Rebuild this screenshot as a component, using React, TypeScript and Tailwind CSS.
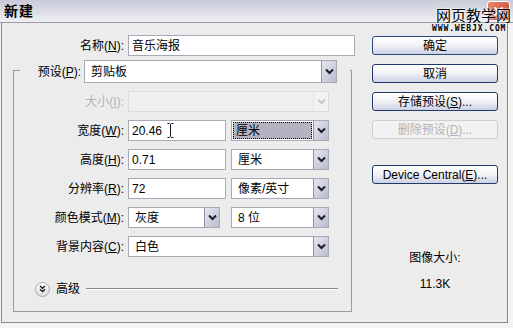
import React from 'react';

const font = "font-['Liberation_Sans','Noto_Sans_CJK_SC',sans-serif]";

function Chevron({ disabled }: { disabled?: boolean }) {
  return (
    <svg width="9" height="7" viewBox="0 0 9 7">
      <path
        d="M1 1.5 L4.5 5 L8 1.5"
        fill="none"
        stroke={disabled ? '#c8c8c8' : '#1a1a2a'}
        strokeWidth="2"
      />
    </svg>
  );
}

function DropButton({ disabled }: { disabled?: boolean }) {
  return (
    <div
      className={`w-[15px] h-full flex items-center justify-center border-l ${
        disabled
          ? 'border-[#e4e4e4] bg-[#f2f2f2]'
          : 'border-[#8e90a8] bg-gradient-to-br from-[#e6e7f0] to-[#b9bccf]'
      }`}>
      <Chevron disabled={disabled} />
    </div>
  );
}

function Select({
  value,
  width,
  disabled,
  focused
}: {
  value: string;
  width: string;
  disabled?: boolean;
  focused?: boolean;
}) {
  return (
    <div
      className={`${width} h-[21px] flex border ${
        disabled ? 'border-[#dcdcdc] bg-[#f0f0f0]' : 'border-[#a7a9b4] bg-white'
      }`}>
      <div className="flex-1 flex items-center p-[1px]">
        {focused ? (
          <div className="w-full h-full flex items-center pl-[2px] bg-[#b3b3c2] border border-dotted border-black">
            {value}
          </div>
        ) : (
          <span className="pl-[5px]">{value}</span>
        )}
      </div>
      <DropButton disabled={disabled} />
    </div>
  );
}

function Input({ value, width, caret }: { value: string; width: string; caret?: boolean }) {
  return (
    <div className={`${width} h-[21px] flex items-center border border-[#a7a9b4] bg-white pl-[3px]`}>
      {value}
      {caret && (
        <svg className="ml-[5px]" width="7" height="15" viewBox="0 0 7 15">
          <path d="M0.5 0.5 H2.5 L3.5 1.5 L4.5 0.5 H6.5 M3.5 1.5 V13.5 M0.5 14.5 H2.5 L3.5 13.5 L4.5 14.5 H6.5" fill="none" stroke="#111" strokeWidth="1" />
        </svg>
      )}
    </div>
  );
}

function Label({ children, disabled }: { children: React.ReactNode; disabled?: boolean }) {
  return (
    <div className={`w-[114px] pr-[4px] text-right ${disabled ? 'text-[#b4b4b4]' : ''}`}>
      {children}
    </div>
  );
}

function Button({ children, primary, disabled }: { children: React.ReactNode; primary?: boolean; disabled?: boolean }) {
  return (
    <div
      className={`w-[126px] h-[19px] rounded-[3px] border flex items-center justify-center ${
        disabled
          ? 'border-[#cfcfcf] bg-[#f2f2f2] text-[#b2b2b2]'
          : `${primary ? 'border-[#2b4a85]' : 'border-[#213a6a]'} bg-gradient-to-b from-white via-[#f2f2f6] to-[#cdd1e3]`
      }`}>
      {children}
    </div>
  );
}

export default function App() {
  return (
    <div className={`w-[513px] h-[328px] bg-[#f4f4f4] relative overflow-hidden text-[12px] text-black ${font}`}>
      {/* title bar */}
      <div className="h-[23px] border-b border-[#9a9aa8] bg-gradient-to-b from-[#c9cad8] to-[#efeff3] flex items-center pl-[4px]">
        <span className="text-[14px] font-bold tracking-[1px]">新建</span>
      </div>

      {/* close button + watermark */}
      <div className="absolute right-[3px] top-[1px] w-[23px] h-[20px] rounded-[3px] border border-white bg-gradient-to-br from-[#e88a70] to-[#c23a22] flex items-center justify-center">
        <svg width="11" height="11" viewBox="0 0 11 11">
          <path d="M1.5 1.5 L9.5 9.5 M9.5 1.5 L1.5 9.5" stroke="white" strokeWidth="2" />
        </svg>
      </div>
      <div className="absolute left-[436px] top-[8px] text-[15px] leading-none [text-shadow:0_0_2px_white,0_0_2px_white]">
        网页教学网
      </div>
      <div className="absolute left-[432px] top-[25px] text-[8px] leading-none font-bold tracking-[0.9px] font-['DejaVu_Sans_Mono',monospace]">
        WWW.WEBJX.COM
      </div>

      {/* window body */}
      <div className="ml-[1px] w-[507px] h-[300px] border-l border-r border-b border-[#8a8a8a] bg-[#ececec] flex">
        {/* left column */}
        <div className="w-[360px] flex flex-col">
          <div className="mt-[12px] flex items-center">
            <div className="w-[126px] pr-[4px] text-right">
              名称(<u>N</u>):
            </div>
            <Input value="音乐海报" width="w-[227px]" />
          </div>

          <div className="ml-[11px] mt-[14px] w-[339px] h-[242px] border border-[#9c9c9c] flex flex-col">
            <div className="-mt-[11px] ml-[6px] w-[330px] h-[23px] bg-[#ececec] flex items-center">
              <div className="w-[64px] pr-[3px] text-right">
                预设(<u>P</u>):
              </div>
              <Select value="剪贴板" width="w-[253px] h-[23px]" />
            </div>

            <div className="mt-[8px] flex items-center">
              <Label disabled>
                大小(<u>I</u>):
              </Label>
              <Select value="" width="w-[201px]" disabled />
            </div>

            <div className="mt-[8px] flex items-center gap-[5px]">
              <Label>
                宽度(<u>W</u>):
              </Label>
              <div className="-ml-[5px]">
                <Input value="20.46" width="w-[98px]" caret />
              </div>
              <Select value="厘米" width="w-[98px]" focused />
            </div>

            <div className="mt-[8px] flex items-center gap-[5px]">
              <Label>
                高度(<u>H</u>):
              </Label>
              <div className="-ml-[5px]">
                <Input value="0.71" width="w-[98px]" />
              </div>
              <Select value="厘米" width="w-[98px]" />
            </div>

            <div className="mt-[8px] flex items-center gap-[5px]">
              <Label>
                分辨率(<u>R</u>):
              </Label>
              <div className="-ml-[5px]">
                <Input value="72" width="w-[98px]" />
              </div>
              <Select value="像素/英寸" width="w-[98px]" />
            </div>

            <div className="mt-[8px] flex items-center gap-[11px]">
              <Label>
                颜色模式(<u>M</u>):
              </Label>
              <div className="-ml-[11px]">
                <Select value="灰度" width="w-[92px]" />
              </div>
              <Select value="8 位" width="w-[98px]" />
            </div>

            <div className="mt-[8px] flex items-center">
              <Label>
                背景内容(<u>C</u>):
              </Label>
              <Select value="白色" width="w-[201px]" />
            </div>

            <div className="mt-[23px] ml-[21px] flex items-center">
              <div className="w-[15px] h-[15px] rounded-full border border-[#a8a8a8] bg-gradient-to-b from-white to-[#dcdcdc] flex items-center justify-center">
                <svg width="7" height="8" viewBox="0 0 7 8">
                  <path d="M1 1 L3.5 3.3 L6 1 M1 4.3 L3.5 6.6 L6 4.3" fill="none" stroke="#222" strokeWidth="1.4" />
                </svg>
              </div>
              <span className="ml-[6px]">高级</span>
              <div className="ml-[6px] w-[252px] h-[2px] border-t border-[#8a8a8a] border-b border-b-white" />
            </div>
          </div>
        </div>

        {/* right column */}
        <div className="ml-[10px] flex flex-col">
          <div className="mt-[13px] flex flex-col gap-[9px]">
            <Button primary>确定</Button>
            <Button>取消</Button>
            <Button>
              存储预设(<u>S</u>)...
            </Button>
            <Button disabled>
              删除预设(<u>D</u>)...
            </Button>
          </div>
          <div className="mt-[26px]">
            <Button>
              Device Central(<u>E</u>)...
            </Button>
          </div>
          <div className="mt-[65px] w-[126px] flex flex-col items-center">
            <span>图像大小:</span>
            <span className="mt-[8px]">11.3K</span>
          </div>
        </div>
      </div>
    </div>
  );
}
